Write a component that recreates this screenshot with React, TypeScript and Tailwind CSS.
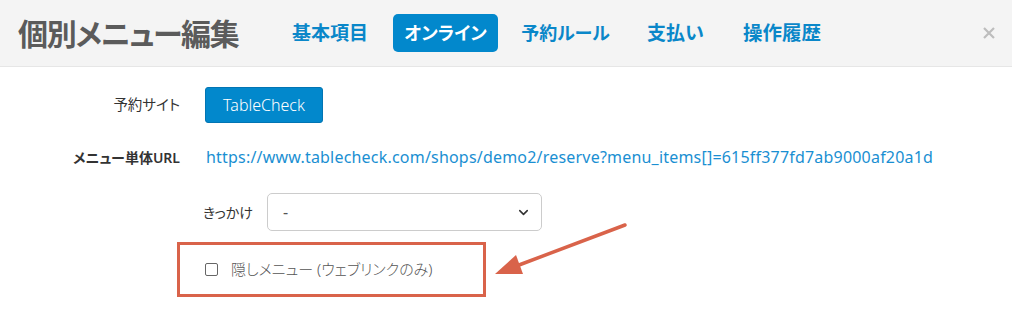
import { ChevronDown } from 'lucide-react'

const TABS = [
  { label: '基本項目', w: 'w-[106px]', size: 'text-[19px]' },
  { label: 'オンライン', w: 'w-[105px]', size: 'text-[18px]', active: true },
  { label: '予約ルール', w: 'w-[115px]', size: 'text-[18px]' },
  { label: '支払い', w: 'w-[85px]', size: 'text-[19px]' },
  { label: '操作履歴', w: 'w-[108px]', size: 'text-[19.5px]' },
]

const URL = 'https://www.tablecheck.com/shops/demo2/reserve?menu_items[]=615ff377fd7ab9000af20a1d'

/** Individual menu edit modal, online tab. */
export default function App() {
  return (
    <div className="relative h-[336px] w-[1012px] overflow-hidden bg-white font-['Noto_Sans','Noto_Sans_CJK_JP',sans-serif] [font-feature-settings:'palt']">
      <div className="flex h-[67px] items-center border-b border-[#e6e6e6] bg-[#f4f4f4] pl-[18px] pr-[18px]">
        <h1 className="w-[220px] whitespace-nowrap text-[30px] font-bold tracking-[-1.3px] text-[#5b5b5b]">個別メニュー編集</h1>
        <nav className="ml-[39px] flex gap-[10px]">
          {TABS.map((t) => (
            <span
              key={t.label}
              className={
                t.active
                  ? `${t.w} ${t.size} flex h-[38px] items-center justify-center rounded-[5px] bg-[#0288cc] font-bold text-white`
                  : `${t.w} ${t.size} flex h-[38px] items-center justify-center font-bold text-[#0a87c9]`
              }
            >
              {t.label}
            </span>
          ))}
        </nav>
        <svg className="ml-auto mr-[-1px]" width="12" height="12" viewBox="0 0 12 12">
          <path d="M1 1L11 11M11 1L1 11" stroke="#bdbdbd" strokeWidth="2.2" />
        </svg>
      </div>

      <div className="pt-[20px]">
        <div className="flex items-center">
          <div className="w-[180px] text-right text-[14.5px] text-[#333]">予約サイト</div>
          <button className="ml-[25px] h-[36px] w-[118px] rounded-[3px] border border-[#0275b3] bg-[#0288cc] text-[16px] font-light text-white">
            TableCheck
          </button>
        </div>

        <div className="mt-[23px] flex items-center">
          <div className="w-[180px] text-right text-[14px] font-semibold text-[#333]">メニュー単体URL</div>
          <a className="ml-[26px] whitespace-nowrap text-[16px] leading-[22px] tracking-[0.2px] text-[#1a8fd2]">{URL}</a>
        </div>

        <div className="mt-[25px] flex items-center pl-[203px]">
          <span className="text-[14px] text-[#333]">きっかけ</span>
          <div className="relative ml-[14px] h-[38px] w-[275px]">
            <select className="h-full w-full appearance-none rounded-[5px] border border-[#cccccc] bg-white pl-[15px] text-[16px] text-[#555] outline-none">
              <option>-</option>
            </select>
            <ChevronDown className="pointer-events-none absolute right-[11px] top-[12px] h-[15px] w-[15px] text-[#333]" strokeWidth={2.5} />
          </div>
        </div>

        <div className="ml-[177px] mt-[11px] flex h-[55px] w-[309px] items-center border-[3px] border-[#d9634a] pl-[25px]">
          <span className="h-[13px] w-[13px] rounded-[2px] border border-[#666]" />
          <span className="ml-[13px] text-[15px] font-light text-[#555]">隠しメニュー (ウェブリンクのみ)</span>
        </div>
      </div>

      <svg className="pointer-events-none absolute left-[490px] top-[218px]" width="140" height="62" viewBox="0 0 140 62">
        <path d="M135 7L29 47" stroke="#d9634a" strokeWidth="3.5" strokeLinecap="round" />
        <path d="M5 56L33 56L26 37Z" fill="#d9634a" />
      </svg>
    </div>
  )
}
